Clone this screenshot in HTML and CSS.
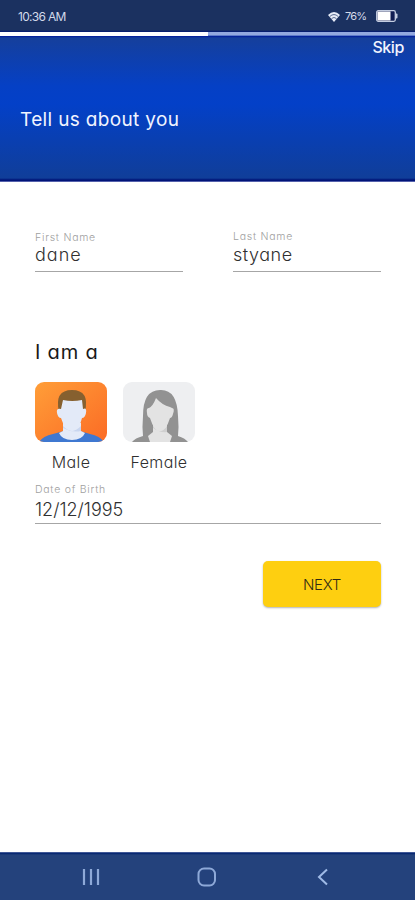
FILE: index.html
```html
<!DOCTYPE html>
<html lang="en">
<head>
<meta charset="utf-8">
<meta name="viewport" content="width=device-width, initial-scale=1">
<title>Tell us about you</title>
<link rel="stylesheet" href="styles.css">
</head>
<body>
<div class="screen">
  <div class="status">
    <span class="time">10:36 AM</span>
    <svg class="wifi" width="12" height="11" viewBox="0 0 12 11"><path d="M0 4Q6-2 12 4L6 11Z" fill="#e8edf8"/><path d="M1.8 5.5Q6 1.6 10.2 5.5M3.6 7.5Q6 5.4 8.4 7.5" fill="none" stroke="#1b3160" stroke-width=".7"/></svg>
    <span class="percent">76%</span>
    <svg class="battery" width="22" height="12" viewBox="0 0 22 12"><rect x=".7" y=".7" width="18.6" height="10.6" rx="1.5" fill="#101d52" stroke="#c5cee2" stroke-width="1.3"/><rect x="1.5" y="1.5" width="13" height="9" fill="#fff"/><path d="M19.5 3.5h1q1 0 1 1v3q0 1-1 1h-1z" fill="#c5cee2"/></svg>
  </div>
  <div class="progress"><div class="progress-fill"></div></div>
  <header class="hero">
    <a class="skip">Skip</a>
    <h1 class="title">Tell us about you</h1>
  </header>
  <main class="form">
    <div class="names">
      <div class="field first"><label class="label">First Name</label><div class="value dane">dane</div></div>
      <div class="field"><label class="label">Last Name</label><div class="value styane">styane</div></div>
    </div>
    <h2 class="question">I am a</h2>
    <div class="options">
      <div class="option">
        <svg class="avatar" width="72" height="60" viewBox="0 0 72 60">
          <defs>
            <linearGradient id="orange" x1="0" y1="0" x2="1" y2="1"><stop offset="0" stop-color="#ff9e38"/><stop offset="1" stop-color="#fb6b25"/></linearGradient>
            <clipPath id="card"><rect width="72" height="60" rx="9"/></clipPath>
          </defs>
          <g clip-path="url(#card)">
            <rect width="72" height="60" fill="url(#orange)"/>
            <path d="M4 60Q8 54 18 52L29 49H45L55 52Q65 54 69 60Z" fill="#3f78d1"/>
            <path d="M28 41H46V49L50 51Q47 58 37 58T24 51L28 49Z" fill="#e3eaf8"/>
            <path d="M28 44Q37 53 46 44V49Q37 51 28 46Z" fill="#c9d6ef"/>
            <path d="M24 30Q19 8 37 8Q55 8 50 30Z" fill="#86602f"/>
            <path d="M26 27L28 18Q37 20 47 18L48 27Q52 25 51 31Q50 36 47 36Q44 49 37 49T26 36Q23 36 22 31Q21 26 26 27Z" fill="#e3eaf8"/>
          </g>
        </svg>
        <span class="caption male">Male</span>
      </div>
      <div class="option">
        <svg class="avatar" width="72" height="60" viewBox="0 0 72 60">
          <rect width="72" height="60" rx="9" fill="#eeeff1"/>
          <path d="M9 60Q12 56 20 54Q19 45 20 34Q20 8 37 8Q54 7 55 34Q56 45 55 54Q62 56 65 60Z" fill="#929292"/>
          <path d="M30 42H44V50L49 54L47 60H27L25 54L30 50Z" fill="#e3e3e3"/>
          <path d="M30 44Q37 54 44 44V50Q37 51 30 46Z" fill="#cfcfcf"/>
          <path d="M26 26Q30 24 33 16Q39 23 47 25L49 26Q52 26 50 32Q49 36 47 36Q43 49 37 49T27 36Q24 35 24 31Q23 26 26 26Z" fill="#e3e3e3"/>
        </svg>
        <span class="caption female">Female</span>
      </div>
    </div>
    <div class="field birth"><label class="label">Date of Birth</label><div class="value date">12/12/1995</div></div>
    <button class="next">NEXT</button>
  </main>
  <nav class="nav">
    <svg width="18" height="18" viewBox="0 0 18 18"><path d="M2 1v16M9 1v16M16 1v16" stroke="#8ea9d8" stroke-width="2.2"/></svg>
    <svg width="20" height="20" viewBox="0 0 20 20"><rect x="1.5" y="1.5" width="16.5" height="17" rx="5.5" fill="none" stroke="#8ea9d8" stroke-width="2"/></svg>
    <svg width="12" height="18" viewBox="0 0 12 18"><path d="M10 1.5L2 9l8 7.5" fill="none" stroke="#9fbae6" stroke-width="2"/></svg>
  </nav>
</div>
</body>
</html>
```
FILE: styles.css
```css
* { box-sizing: border-box; }
body {
  margin: 0;
  font-family: Inter, "Open Sans", sans-serif;
  font-feature-settings: "cv11";
  color: #303030;
  background: #fff;
}
.screen { height: 900px; display: flex; flex-direction: column; overflow: hidden; }
.status {
  flex: none;
  height: 32px;
  display: flex;
  align-items: center;
  padding: 0 17px 0 18px;
  background: linear-gradient(#1b3160 30px, #001673 32px);
  color: #d3daea;
}
.time { font-size: 12px; letter-spacing: -0.7px; margin-right: auto; }
.percent { font-size: 11px; letter-spacing: -0.8px; width: 21px; margin: 0 10px 0 5px; }
.progress { flex: none; height: 4px; background: #93a8df; border-bottom: 1px solid #5e7bca; }
.progress-fill { width: 208px; height: 4px; background: #fff; }
.hero {
  flex: none;
  height: 146px;
  display: flex;
  flex-direction: column;
  padding: 0 11px 0 20px;
  color: #f1f4ff;
  background: linear-gradient(#00199a 0, #153f9c 2px, #0540c5 50px, #0340c8 68px, #103e99 142px, #001377 144px, #001377 145px, #a9aee0 146px);
}
.skip { align-self: flex-end; font-size: 16px; line-height: 23px; font-weight: 500; letter-spacing: -0.4px; }
.title { margin: 48px 0 0; font-size: 19px; line-height: 26px; font-weight: 420; letter-spacing: .35px; }
.form { flex: 1; display: flex; flex-direction: column; padding: 48px 34px 0 35px; }
.names { display: grid; grid-template-columns: 148px 148px; column-gap: 50px; align-items: end; }
.field { border-bottom: 1px solid #a6a6a6; display: flex; flex-direction: column; }
.label { font-size: 10.5px; line-height: 13px; font-weight: 300; color: #a0a0a0; letter-spacing: .75px; margin-bottom: 2px; }
.first .label { margin-bottom: 1px; }
.value { font-size: 18px; line-height: 20px; font-weight: 300; margin-bottom: 6px; }
.dane { letter-spacing: 1px; }
.styane { letter-spacing: .5px; }
.question { margin: 67px 0 0; font-size: 20px; line-height: 26px; font-weight: 400; color: #181818; letter-spacing: .8px; }
.options { display: flex; gap: 16px; margin-top: 17px; }
.option { width: 72px; display: flex; flex-direction: column; align-items: center; }
.avatar { display: block; }
.caption { margin-top: 9px; font-size: 16px; line-height: 22px; font-weight: 300; letter-spacing: .4px; }
.birth { margin-top: 10px; }
.birth .label { margin-bottom: 4px; }
.date { margin-bottom: 3px; }
.next {
  align-self: flex-end;
  width: 118px;
  height: 46px;
  margin: 37px 0 0;
  padding: 0;
  border: 0;
  border-radius: 5px;
  background: #fecf10;
  box-shadow: 0 1px 2px rgba(0, 0, 0, .3);
  font: 300 15px Inter, sans-serif;
  letter-spacing: -.3px;
  color: #302b14;
}
.nav {
  flex: none;
  height: 48px;
  display: grid;
  grid-template-columns: 116px 116px 116px;
  justify-content: center;
  align-items: center;
  justify-items: center;
  padding: 1px 2px 0 0;
  background: linear-gradient(#8090bd 0, #00206f 1px, #24427c 3px);
}
```
